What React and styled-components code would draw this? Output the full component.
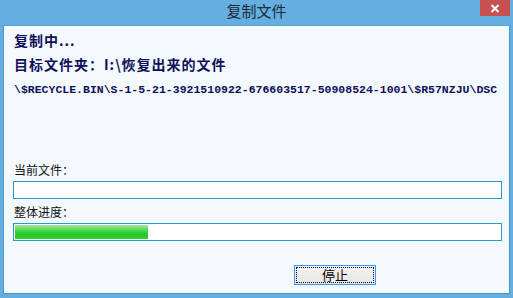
import React from "react";
import styled, { createGlobalStyle } from "styled-components";

const Global = createGlobalStyle`
  html, body { margin: 0; padding: 0; background: #64aee0; }
  body { font-family: "Noto Sans CJK SC", "Noto Sans", sans-serif; }
`;

const Window = styled.div`
  width: 513px;
  height: 298px;
  background: #64aee0;
  display: flex;
  flex-direction: column;
  box-sizing: border-box;
  overflow: hidden;
`;

const TitleBar = styled.div`
  height: 25px;
  display: flex;
  align-items: flex-start;
  justify-content: center;
  position: relative;
`;

const Title = styled.div`
  font-size: 15px;
  line-height: 20px;
  padding-top: 1px;
  color: #1e2a36;
`;

const CloseButton = styled.div`
  position: absolute;
  top: 0;
  right: 3px;
  width: 30px;
  height: 16px;
  background: #c75050;
  display: flex;
  align-items: center;
  justify-content: center;
`;

const Panel = styled.div`
  flex: 1;
  margin: 0 3px 4px 3px;
  background: #f4f9fe;
  border: 1px solid #4d94c8;
  border-top-color: #5aa0d4;
  box-sizing: border-box;
  padding: 6px 9px 0 9px;
  display: flex;
  flex-direction: column;
`;

const BoldLine = styled.div`
  font-size: 14px;
  line-height: 16px;
  font-weight: 700;
  letter-spacing: 1px;
  color: #10105a;
  padding-left: 1px;
  margin-bottom: ${(p) => p.$mb || 0}px;
  white-space: nowrap;
`;

const PathLine = styled.div`
  font-family: "Liberation Mono", "DejaVu Sans Mono", monospace;
  font-weight: 700;
  font-size: 11.5px;
  line-height: 16px;
  color: #10105a;
  padding-left: 1px;
  white-space: nowrap;
`;

const Label = styled.div`
  font-size: 12px;
  line-height: 16px;
  color: #111;
  padding-left: 1px;
  margin-top: ${(p) => p.$mt || 0}px;
  margin-bottom: 3px;
`;

const Box = styled.div`
  height: 18px;
  width: 489px;
  box-sizing: border-box;
  border: 1px solid #2c97d3;
  background: #ffffff;
  padding: 1px;
  display: flex;
`;

const Fill = styled.div`
  height: 100%;
  background: linear-gradient(
    to bottom,
    #a4e8a4 0%,
    #62da62 30%,
    #2ccf2c 55%,
    #27c927 80%,
    #3bd23b 100%
  );
`;

const ButtonRow = styled.div`
  display: flex;
  padding-left: 281px;
  margin-top: 24px;
`;

const Button = styled.div`
  width: 82px;
  height: 20px;
  box-sizing: border-box;
  border: 1px solid #3399ff;
  background: linear-gradient(to bottom, #f2f2f2, #e5e5e5);
  padding: 1px;
`;

const Focus = styled.div`
  height: 100%;
  box-sizing: border-box;
  border: 1px dotted #000;
  display: flex;
  align-items: center;
  justify-content: center;
  font-size: 13px;
  color: #000;
  line-height: 14px;
`;

export default function App() {
  return (
    <>
      <Global />
      <Window>
        <TitleBar>
          <Title>复制文件</Title>
          <CloseButton>
            <svg width="10" height="9" viewBox="0 0 10 9">
              <path d="M1.5 1 L8.5 8 M8.5 1 L1.5 8" stroke="#fff" strokeWidth="2" />
            </svg>
          </CloseButton>
        </TitleBar>
        <Panel>
          <BoldLine $mb={8}>复制中...</BoldLine>
          <BoldLine $mb={10}>目标文件夹：I:\恢复出来的文件</BoldLine>
          <PathLine>
            \$RECYCLE.BIN\S-1-5-21-3921510922-676603517-50908524-1001\$R57NZJU\DSC
          </PathLine>
          <Label $mt={64}>当前文件：</Label>
          <Box />
          <Label $mt={5}>整体进度：</Label>
          <Box>
            <Fill style={{ width: "27.5%" }} />
          </Box>
          <ButtonRow>
            <Button>
              <Focus>停止</Focus>
            </Button>
          </ButtonRow>
        </Panel>
      </Window>
    </>
  );
}
